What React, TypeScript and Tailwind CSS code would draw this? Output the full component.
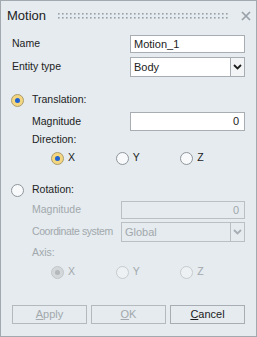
import React from "react";

type RadioProps = { checked?: boolean; disabled?: boolean };

function Radio({ checked, disabled }: RadioProps) {
    if (disabled) {
        return (
            <span
                className={
                    checked
                        ? "flex h-[13px] w-[13px] shrink-0 items-center justify-center rounded-full border border-[#c2c7ca] bg-[#d3d7da]"
                        : "flex h-[13px] w-[13px] shrink-0 items-center justify-center rounded-full border border-[#c6cbce] bg-[#eef1f3]"
                }
            >
                {checked && <span className="h-[5px] w-[5px] rounded-full bg-[#b4b8bb]" />}
            </span>
        );
    }
    return (
        <span
            className={
                checked
                    ? "flex h-[13px] w-[13px] shrink-0 items-center justify-center rounded-full border border-[#a99c6e] bg-[#f3d67f]"
                    : "flex h-[13px] w-[13px] shrink-0 items-center justify-center rounded-full border border-[#8f969b] bg-[#f7f9fa]"
            }
        >
            {checked && <span className="h-[5px] w-[5px] rounded-full bg-[#1d62d0]" />}
        </span>
    );
}

function Chevron({ disabled }: { disabled?: boolean }) {
    return (
        <svg width="9" height="6" viewBox="0 0 9 6">
            <path d="M1 1 L4.5 4.5 L8 1" fill="none" stroke={disabled ? "#a7aeb3" : "#1f1f1f"} strokeWidth="1.8" />
        </svg>
    );
}

function AxisRow({ disabled }: { disabled?: boolean }) {
    const text = disabled ? "text-[#a2a8ac]" : "text-[#1b1b1b]";
    return (
        <div className="flex h-[16px] items-center pl-[40px]">
            {["X", "Y", "Z"].map((a, i) => (
                <div key={a} className="flex w-[65.5px] items-center gap-[4px]">
                    <Radio checked={i === 0} disabled={disabled} />
                    <span className={text}>{a}</span>
                </div>
            ))}
        </div>
    );
}

export default function App() {
    return (
        <div className="flex h-[337px] w-[257px] flex-col border border-[#a3aaaf] bg-[#e5ebef] font-['Liberation_Sans',Arial,sans-serif] text-[10.5px] text-[#222]">
            <div className="flex h-[29px] items-center pl-[6px] pr-[5px]">
                <span className="text-[13px] text-[#222]">Motion</span>
                <div className="ml-[12px] mr-[11px] flex-1">
                    <svg className="block h-[6px] w-full">
                        <defs>
                            <pattern id="grip" width="4" height="4" patternUnits="userSpaceOnUse">
                                <rect x="0" y="0" width="1.6" height="1.6" fill="#97a1a8" />
                            </pattern>
                        </defs>
                        <rect width="100%" height="6" fill="url(#grip)" />
                    </svg>
                </div>
                <svg width="10" height="10" viewBox="0 0 10 10">
                    <path d="M1 1 L9 9 M9 1 L1 9" stroke="#98a2a8" strokeWidth="1.7" />
                </svg>
            </div>

            <div className="flex flex-col pl-[10px] pr-[11px]">
                <div className="mt-[5px] flex h-[18px] items-center">
                    <span className="w-[119px] pl-[1px]">Name</span>
                    <div className="flex h-full flex-1 items-center border border-[#a7adb2] bg-white px-[3px] text-[11px]">Motion_1</div>
                </div>

                <div className="mt-[4px] flex h-[20px] items-center">
                    <span className="w-[119px] pl-[1px]">Entity type</span>
                    <div className="flex h-full flex-1 border border-[#a7adb2] bg-white">
                        <span className="flex flex-1 items-center px-[3px] text-[11px]">Body</span>
                        <span className="flex w-[14px] items-center justify-center border-l border-[#a7adb2] bg-[#f2f4f5]">
                            <Chevron />
                        </span>
                    </div>
                </div>

                <div className="mt-[15px] flex h-[16px] items-center gap-[8px]">
                    <Radio checked />
                    <span>Translation:</span>
                </div>

                <div className="mt-[4px] flex h-[19px] items-center pl-[21px]">
                    <span className="flex-1">Magnitude</span>
                    <div className="flex h-full w-[115px] items-center justify-end border border-[#a7adb2] bg-white pr-[5px] text-[11px]">0</div>
                </div>

                <div className="mt-[2px] flex h-[14px] items-center pl-[21px]">Direction:</div>

                <div className="mt-[3px]">
                    <AxisRow />
                </div>

                <div className="mt-[16px] flex h-[16px] items-center gap-[8px]">
                    <Radio />
                    <span>Rotation:</span>
                </div>

                <div className="mt-[3px] flex h-[18px] items-center pl-[21px] text-[#a2a8ac]">
                    <span className="flex-1">Magnitude</span>
                    <div className="flex h-full w-[124px] items-center justify-end border border-[#b9bfc3] pr-[5px] text-[11px]">0</div>
                </div>

                <div className="mt-[3px] flex h-[20px] items-center pl-[21px] text-[#a2a8ac]">
                    <span className="flex-1 tracking-[-0.4px]">Coordinate system</span>
                    <div className="flex h-full w-[124px] border border-[#b9bfc3]">
                        <span className="flex flex-1 items-center px-[3px] text-[11px]">Global</span>
                        <span className="flex w-[14px] items-center justify-center border-l border-[#b9bfc3]">
                            <Chevron disabled />
                        </span>
                    </div>
                </div>

                <div className="mt-[4px] flex h-[14px] items-center pl-[21px] text-[#a2a8ac]">Axis:</div>

                <div className="mt-[4px]">
                    <AxisRow disabled />
                </div>

                <div className="mt-[25px] flex h-[19px] gap-[4px] pl-[1px] text-[11px]">
                    <button className="flex w-[75px] items-center justify-center border border-[#b3b9bd] bg-[#e5ebef] text-[#a2a8ac]">
                        <span><span className="underline">A</span>pply</span>
                    </button>
                    <button className="flex w-[75px] items-center justify-center border border-[#b3b9bd] bg-[#e5ebef] text-[#a2a8ac]">
                        <span><span className="underline">O</span>K</span>
                    </button>
                    <button className="flex w-[75px] items-center justify-center border border-[#a7adb2] bg-[#e5ebef] text-[#1b1b1b]">
                        <span><span className="underline">C</span>ancel</span>
                    </button>
                </div>
            </div>
        </div>
    );
}
